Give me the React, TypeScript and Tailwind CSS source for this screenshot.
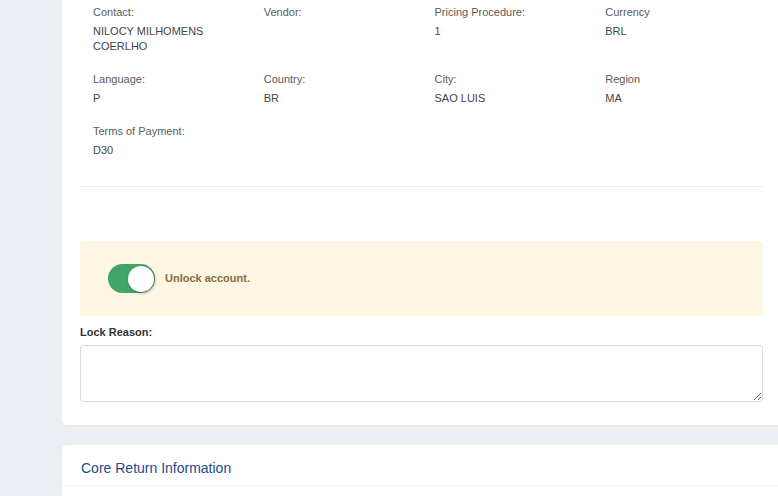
import React from "react";

const fields: { label: string; value: string[] }[][] = [
  [
    { label: "Contact:", value: ["NILOCY MILHOMENS", "COERLHO"] },
    { label: "Vendor:", value: [] },
    { label: "Pricing Procedure:", value: ["1"] },
    { label: "Currency", value: ["BRL"] },
  ],
  [
    { label: "Language:", value: ["P"] },
    { label: "Country:", value: ["BR"] },
    { label: "City:", value: ["SAO LUIS"] },
    { label: "Region", value: ["MA"] },
  ],
  [{ label: "Terms of Payment:", value: ["D30"] }],
];

export default function App() {
  return (
    <div
      className="w-[778px] h-[496px] overflow-hidden bg-[#ebeff3] pl-[62px]"
      style={{ fontFamily: '"Liberation Sans", Arial, sans-serif' }}
    >
      <div className="w-[721px] bg-white rounded-b-[5px] border-b border-[#e2e6ea] pl-[18px] pr-[20px] pt-[5px] pb-[23px]">
        <div className="grid grid-cols-4">
          {fields.flat().map((f, i) => (
            <div key={i} className="pl-[13px] mb-[18px] text-[11px] leading-[15px]">
              <div className="text-[#5a5a5a]">{f.label}</div>
              <div className="mt-[4px] text-[#444] min-h-[15px]">
                {f.value.map((v, j) => (
                  <div key={j}>{v}</div>
                ))}
              </div>
            </div>
          ))}
        </div>
        <div className="mt-[10px] border-t border-[#eceef0]" />
        <div className="mt-[54px] h-[75px] rounded-[3px] bg-[#fcf6e3] flex items-center pl-[28px]">
          <div className="relative w-[47px] h-[29px] rounded-full bg-[#40a566]">
            <div className="absolute right-[1px] top-[1.5px] w-[26px] h-[26px] rounded-full bg-white shadow-[1px_1px_3px_rgba(0,0,0,0.35)]" />
          </div>
          <span className="ml-[10px] text-[11px] font-bold text-[#8a6d3b]">Unlock account.</span>
        </div>
        <div className="mt-[9px] text-[11px] leading-[15px] font-bold text-[#333]">Lock Reason:</div>
        <textarea className="mt-[5px] block w-full h-[57px] rounded-[3px] border border-[#d5d9de] bg-white outline-none" />
      </div>
      <div className="mt-[19px] w-[721px] h-[60px] bg-white rounded-t-[5px]">
        <div className="h-[41px] border-b border-[#eef0f2] pl-[19px] pt-[15px] text-[14px] leading-[16px] text-[#234a8a]">
          Core Return Information
        </div>
      </div>
    </div>
  );
}
